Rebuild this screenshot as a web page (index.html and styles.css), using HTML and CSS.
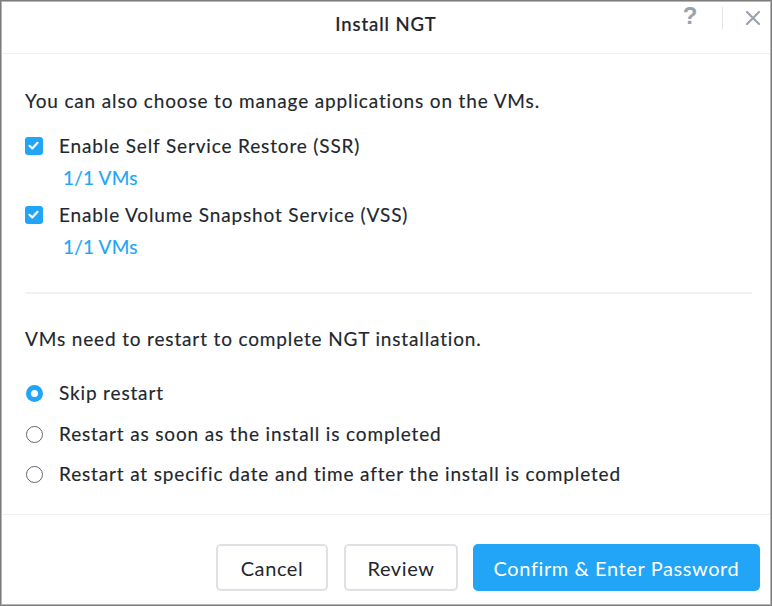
FILE: index.html
```html
<!DOCTYPE html>
<html>
<head>
<meta charset="utf-8">
<link rel="stylesheet" href="styles.css">
</head>
<body>
<div class="dialog">
  <div class="header">
    <div class="title">Install NGT</div>
    <div class="tools">
      <span class="help">?</span>
      <span class="vsep"></span>
      <svg class="close" width="16" height="16" viewBox="0 0 16 16"><path d="M2 2 L14 14 M14 2 L2 14" stroke="#9aa3ad" stroke-width="2.2" stroke-linecap="round"/></svg>
    </div>
  </div>
  <div class="body">
    <p class="intro">You can also choose to manage applications on the VMs.</p>
    <div class="opt first">
      <span class="cb"><svg width="17" height="17" viewBox="0 0 17 17"><path d="M4.5 8.8 L7.3 11.4 L12.5 5.8" fill="none" stroke="#fff" stroke-width="2.2" stroke-linecap="round" stroke-linejoin="round"/></svg></span>
      <span>Enable Self Service Restore (SSR)</span>
    </div>
    <div class="vms">1/1 VMs</div>
    <div class="opt second">
      <span class="cb"><svg width="17" height="17" viewBox="0 0 17 17"><path d="M4.5 8.8 L7.3 11.4 L12.5 5.8" fill="none" stroke="#fff" stroke-width="2.2" stroke-linecap="round" stroke-linejoin="round"/></svg></span>
      <span>Enable Volume Snapshot Service (VSS)</span>
    </div>
    <div class="vms">1/1 VMs</div>
    <hr class="sep">
    <p class="note">VMs need to restart to complete NGT installation.</p>
    <div class="radio r1"><span class="rb on"></span><span>Skip restart</span></div>
    <div class="radio r2"><span class="rb"></span><span>Restart as soon as the install is completed</span></div>
    <div class="radio r3"><span class="rb"></span><span>Restart at specific date and time after the install is completed</span></div>
  </div>
  <div class="footer">
    <button class="btn">Cancel</button>
    <button class="btn review">Review</button>
    <button class="btn primary">Confirm &amp; Enter Password</button>
  </div>
</div>
</body>
</html>
```

FILE: styles.css
```css
* { box-sizing: border-box; }
html, body { margin: 0; padding: 0; background: #fff; }
body { font-family: "Lato", "Liberation Sans", sans-serif; color: #22272e; }

.dialog {
  width: 772px;
  height: 606px;
  border: 1px solid #7d7d7d;
  box-shadow: inset 0 0 0 1px #b5b5b5;
  display: flex;
  flex-direction: column;
  padding: 1px;
}

.header {
  height: 52px;
  border-bottom: 1px solid #eef0f2;
  display: flex;
  align-items: flex-start;
  justify-content: center;
  position: relative;
}
.title {
  font-size: 18.5px;
  font-weight: 500;
  letter-spacing: 0.9px;
  line-height: 24px;
  margin-top: 10px;
  color: #1f242b;
  -webkit-text-stroke: 0.2px #1f242b;
}
.tools {
  position: absolute;
  right: 0;
  top: 0;
  display: flex;
  align-items: center;
  height: 32px;
}
.help {
  font-family: "Liberation Sans", sans-serif;
  font-size: 24px;
  line-height: 24px;
  color: #9aa3ad;
  font-weight: 700;
  width: 20px;
  text-align: center;
  margin-right: 22px;
  margin-top: -4px;
}
.vsep {
  width: 1px;
  height: 22px;
  background: #e3e6e9;
  margin-right: 22px;
}
.close { margin-right: 9px; }

.body {
  flex: 1;
  padding: 35px 18px 0 23px;
  font-size: 19px;
  letter-spacing: 0.85px;
  line-height: 24px;
  -webkit-text-stroke: 0.15px #22272e;
}
.intro { margin: 0 0 21px 0; }
.opt { display: flex; align-items: center; height: 24px; }
.opt.second { margin-top: 13px; }
.cb {
  width: 18px;
  height: 18px;
  border-radius: 3px;
  background: #22a5f7;
  margin: 0 16px 0 0;
  display: flex;
}
.vms {
  color: #22a5f7;
  -webkit-text-stroke: 0.15px #22a5f7;
  letter-spacing: 0.2px;
  margin: 8px 0 0 38px;
}
.sep {
  border: 0;
  height: 2px;
  background: #f1f2f3;
  margin: 33px 0 0 0;
}
.note { margin: 33px 0 30px 0; }
.radio { display: flex; align-items: center; height: 24px; }
.radio.r2 { margin-top: 17px; }
.radio.r3 { margin-top: 16px; }
.rb {
  width: 17px;
  height: 17px;
  border-radius: 50%;
  border: 1.5px solid #5c6670;
  margin: 0 16px 0 1px;
  flex: none;
}
.rb.on {
  border: 5.5px solid #22a5f7;
  background: #fff;
}

.footer {
  border-top: 1px solid #eef0f2;
  height: 90px;
  display: flex;
  justify-content: flex-end;
  align-items: flex-start;
  padding: 29px 10px 0 0;
  gap: 16px;
}
.btn {
  font-family: inherit;
  height: 47px;
  border: 2px solid #dde1e5;
  border-radius: 5px;
  background: #fff;
  color: #22272e;
  font-size: 20px;
  letter-spacing: 0.6px;
  width: 112px;
  padding: 0;
}
.btn.review { width: 114px; margin-right: -1px; }
.btn.primary {
  width: 287px;
  background: #22a5f7;
  border-color: #22a5f7;
  color: #fff;
}
```
